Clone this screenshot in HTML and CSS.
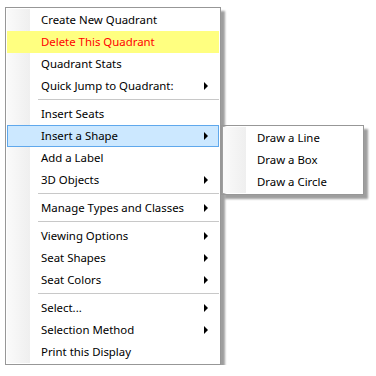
FILE: index.html
```html
<!DOCTYPE html>
<html>
<head>
<meta charset="UTF-8">
<title>Quadrant menu</title>
<link rel="stylesheet" href="styles.css">
</head>
<body>
<div class="menu">
  <div class="item">Create New Quadrant</div>
  <div class="item danger">Delete This Quadrant</div>
  <div class="item">Quadrant Stats</div>
  <div class="item sub">Quick Jump to Quadrant:</div>
  <div class="sep"></div>
  <div class="item">Insert Seats</div>
  <div class="item sub active">Insert a Shape
    <!-- flyout -->
    <div class="menu flyout">
      <div class="item">Draw a Line</div>
      <div class="item">Draw a Box</div>
      <div class="item">Draw a Circle</div>
    </div>
  </div>
  <div class="item">Add a Label</div>
  <div class="item sub">3D Objects</div>
  <div class="sep"></div>
  <div class="item sub">Manage Types and Classes</div>
  <div class="sep"></div>
  <div class="item sub">Viewing Options</div>
  <div class="item sub">Seat Shapes</div>
  <div class="item sub">Seat Colors</div>
  <div class="sep"></div>
  <div class="item sub">Select...</div>
  <div class="item sub">Selection Method</div>
  <div class="item">Print this Display</div>
</div>
</body>
</html>
```
FILE: styles.css
```css
* {
	margin: 0;
	padding: 0;
	box-sizing: border-box;
}

body {
	background: #fff;
	font-family: "Noto Sans", "Open Sans", sans-serif;
	font-size: 11.4px;
	color: #000;
	padding: 7px 0 0 5px;
}

.menu {
	width: 216px;
	border: 1px solid #979797;
	padding: 1px;
	background: linear-gradient(to right, #fafafa 0, #efefef 23px, #fff 23px) no-repeat;
	background-origin: content-box;
	background-clip: content-box;
	background-color: #fff;
	box-shadow: 4px 4px 2px rgba(0, 0, 0, 0.38);
}

.item {
	height: 22px;
	line-height: 22px;
	padding-left: 34px;
	position: relative;
	white-space: nowrap;
}

.danger {
	background: #ffff80;
	color: #f00;
}

/* arrow for items with a submenu */
.sub::after {
	content: "";
	position: absolute;
	right: 11px;
	top: 7px;
	border-left: 4px solid #000;
	border-top: 4px solid transparent;
	border-bottom: 4px solid transparent;
}

.active {
	background: #cce8ff;
	border: 1px solid #5fa8ec;
	line-height: 20px;
	padding-left: 33px;
}

.active::after {
	right: 10px;
	top: 6px;
}

.sep {
	height: 6px;
	margin-left: 31px;
	background: linear-gradient(#c8c8c8, #c8c8c8) no-repeat 0 2px / 100% 1px;
}

.flyout {
	position: absolute;
	left: 213px;
	top: -1px;
	width: 143px;
	line-height: 22px;
	z-index: 2;
}
```
